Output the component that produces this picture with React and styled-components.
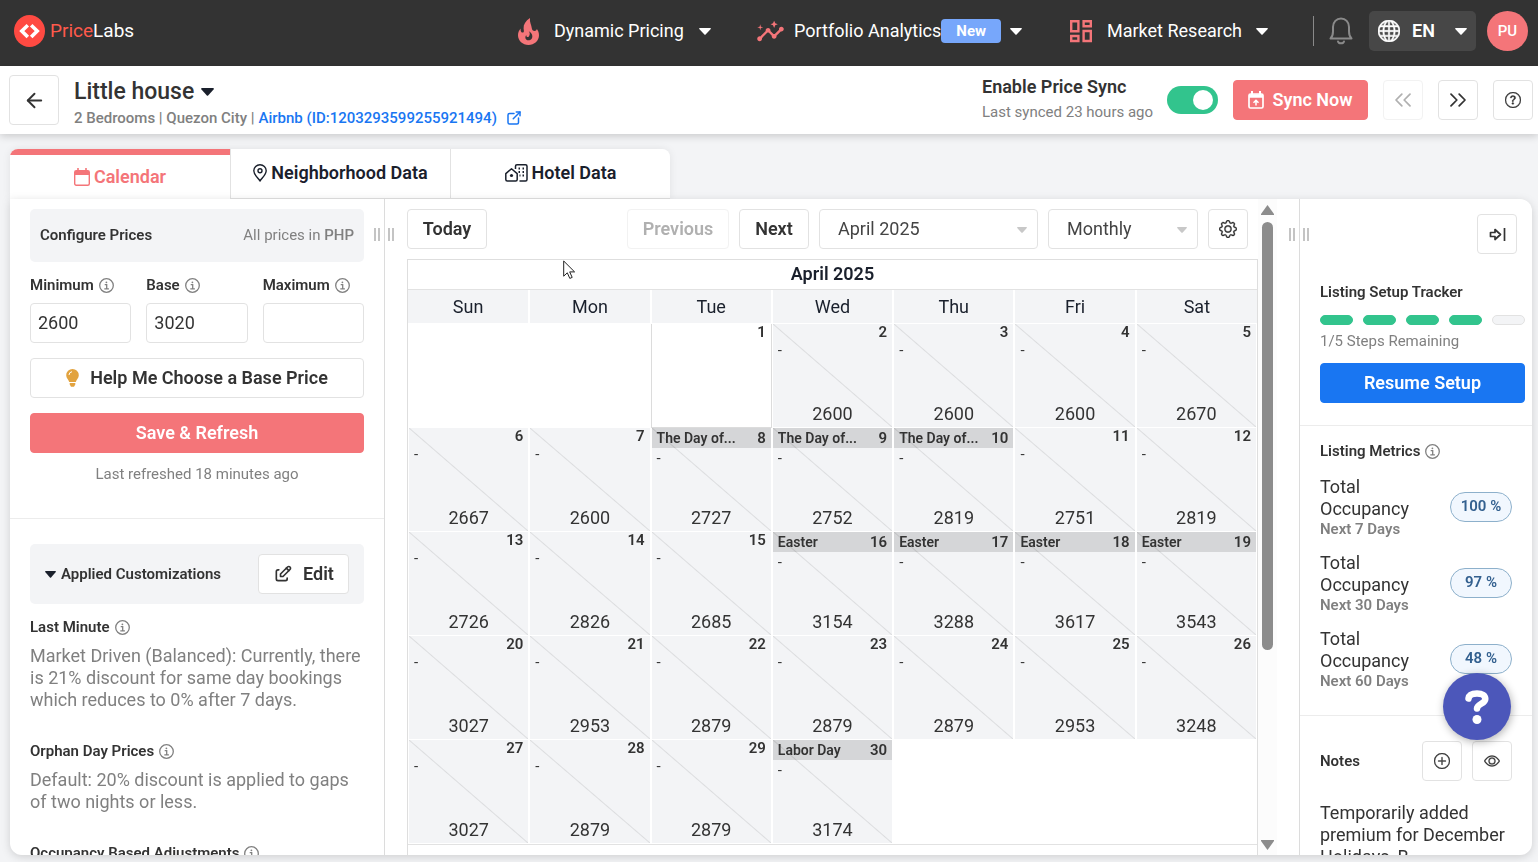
import React from 'react';
import styled, { createGlobalStyle, css } from 'styled-components';
import { MdInsights } from 'react-icons/md';
import { BsGlobe, BsGear, BsQuestionCircle, BsPlusCircle, BsEye } from 'react-icons/bs';
import { TbEdit, TbExternalLink } from 'react-icons/tb';
import { ArrowLeft, ChevronsLeft, ChevronsRight } from 'lucide-react';

const color = {
  coral: '#f47579',
  green: '#32c48d',
  blue: '#1976f2',
  dark: '#333333',
  ink: '#1a202c',
  muted: '#808080',
  line: '#e2e2e2',
  wash: '#f3f4f6',
};

const GlobalStyle = createGlobalStyle`
  *, *::before, *::after { box-sizing: border-box; }
  body {
    margin: 0;
    background: ${color.wash};
    color: ${color.dark};
    font-family: Roboto, "Liberation Sans", sans-serif;
    font-size: 18px;
    line-height: 22px;
  }
  button, input, select { font: inherit; color: inherit; margin: 0; }
  button { cursor: pointer; }
  h1, h2, h3, p { margin: 0; }
  svg { display: block; flex: none; }
`;

const Page = styled.div`
  height: 100vh;
  display: flex;
  flex-direction: column;
  overflow: hidden;
  padding-bottom: 7px;
`;

/* ---------- top bar ---------- */

const TopBar = styled.header`
  flex: 0 0 66px;
  display: flex;
  align-items: center;
  padding: 0 10px 4px 14px;
  background: ${color.dark};
  color: #fff;
`;

const Brand = styled.a`
  display: flex;
  align-items: center;
  gap: 5px;
  margin-right: auto;
  color: #fff;
  font-size: 19px;
  text-decoration: none;
  em { font-style: normal; color: #ff5a4c; }
`;

const NavList = styled.nav`
  display: flex;
  align-items: center;
`;

const NavButton = styled.button`
  flex: 0 0 ${(p) => p.$basis};
  display: flex;
  align-items: center;
  gap: ${(p) => p.$gap};
  padding: 0;
  border: 0;
  background: none;
  white-space: nowrap;
  text-align: left;
`;

const NavText = styled.span`
  display: flex;
  align-items: center;
`;

const NewTag = styled.span`
  padding: 1px 15px;
  border-radius: 4px;
  background: #77a7fb;
  font-size: 15px;
  font-weight: 700;
`;

const TopTools = styled.div`
  display: flex;
  align-items: center;
  height: 40px;
`;

const Rule = styled.span`
  width: 1px;
  height: 30px;
  background: #8a8a8a;
`;

const BellButton = styled.button`
  padding: 0 16px 0 15px;
  border: 0;
  background: none;
  color: #8a8a8a;
`;

const LanguageButton = styled.button`
  display: flex;
  align-items: center;
  gap: 12px;
  width: 107px;
  height: 40px;
  padding: 0 9px;
  border: 0;
  border-radius: 5px;
  background: #474747;
  font-weight: 600;
  svg:last-child { margin-left: auto; }
`;

const Avatar = styled.button`
  width: 41px;
  height: 40px;
  margin-left: 11px;
  padding: 0;
  border: 0;
  border-radius: 50%;
  background: ${color.coral};
  font-size: 15px;
  font-weight: 500;
`;

/* ---------- shared controls ---------- */

const Button = styled.button`
  display: flex;
  align-items: center;
  justify-content: center;
  gap: ${(p) => p.$gap || '8px'};
  width: ${(p) => p.$width || 'auto'};
  height: 40px;
  padding: 0;
  border: 1px solid ${color.line};
  border-radius: 4px;
  background: #fff;
  color: ${color.dark};
  font-weight: 600;
  white-space: nowrap;
  &:disabled { border-color: #f2f2f2; color: #b0b0b0; cursor: default; }
  ${(p) => p.$fill && css`
    border-color: ${p.$fill};
    background: ${p.$fill};
    color: #fff;
  `}
`;

const Heading = styled.h3`
  display: flex;
  align-items: center;
  gap: 5px;
  font-size: 15px;
  line-height: 20px;
  font-weight: 600;
`;

const Small = styled.p`
  font-size: 15px;
  line-height: 20px;
  color: ${color.muted};
  strong { font-weight: 500; }
`;

/* ---------- listing bar ---------- */

const ListingBar = styled.section`
  position: relative;
  flex: 0 0 68px;
  display: flex;
  align-items: center;
  padding: 0 5px 0 9px;
  background: #fff;
  box-shadow: 0 2px 8px rgba(0, 0, 0, 0.18);
`;

const BackButton = styled(Button)`
  width: 50px;
  height: 50px;
`;

const ListingName = styled.div`
  margin: 0 auto 0 15px;
  padding-top: 6px;
  font-weight: 500;
  color: ${color.muted};
`;

const ListingTitle = styled.h1`
  display: flex;
  align-items: center;
  gap: 7px;
  font-size: 23px;
  line-height: 30px;
  font-weight: 500;
  color: ${color.dark};
`;

const ListingMeta = styled.p`
  display: flex;
  align-items: center;
  gap: 4px;
  font-size: 15px;
`;

const ChannelLink = styled.a`
  display: flex;
  align-items: center;
  gap: 8px;
  color: ${color.blue};
  text-decoration: none;
`;

const SyncInfo = styled.label`
  width: 185px;
  font-weight: 600;
  line-height: 24px;
  small {
    display: block;
    font-size: 15px;
    line-height: 26px;
    font-weight: 400;
    color: ${color.muted};
  }
`;

const Toggle = styled.input`
  appearance: none;
  width: 51px;
  height: 28px;
  margin: 0;
  border-radius: 14px;
  background: ${color.green};
  cursor: pointer;
  &::before {
    content: '';
    display: block;
    width: 20px;
    height: 20px;
    margin: 4px 5px 4px 26px;
    border-radius: 50%;
    background: #fff;
  }
`;

const ListingActions = styled.div`
  display: flex;
  gap: 15px;
  margin-left: 15px;
`;

/* ---------- tabs ---------- */

const TabStrip = styled.div`
  flex: none;
  display: flex;
  width: max-content;
  margin: 15px 0 0 10px;
  border-radius: 8px 8px 0 0;
  overflow: hidden;
  box-shadow: 0 0 8px rgba(0, 0, 0, 0.08);
`;

const Tab = styled.button`
  display: flex;
  align-items: center;
  justify-content: center;
  gap: 4px;
  width: 220px;
  height: 50px;
  padding: 0 0 2px;
  border: 0;
  border-bottom: 1px solid ${color.line};
  border-left: 1px solid ${color.line};
  background: #fff;
  color: ${color.ink};
  font-weight: 600;
  ${(p) => p.$active && css`
    padding: 0;
    border-top: 6px solid ${color.coral};
    border-bottom: 0;
    border-left: 0;
    color: ${color.coral};
  `}
`;

/* ---------- workspace ---------- */

const WorkspaceShadow = styled.div`
  flex: 1;
  min-height: 0;
  display: flex;
  flex-direction: column;
  filter: drop-shadow(0 2px 4px rgba(0, 0, 0, 0.15));
`;

const Workspace = styled.main`
  flex: 1;
  min-height: 0;
  display: flex;
  margin: 0 6px 0 10px;
  border-radius: 0 12px 12px 12px;
  overflow: hidden;
  background: #fff;
`;

const Splitter = styled.div`
  position: relative;
  flex: 0 0 1px;
  background: #dcdcdc;
`;

const Grips = styled.span`
  position: absolute;
  top: 29px;
  left: -10px;
  display: flex;
  justify-content: space-between;
  width: 20px;
  height: 13px;
  i { width: 6px; border: solid #c4c4c4; border-width: 0 2px; }
`;

const PricePanel = styled.aside`
  flex: 0 0 374px;
  overflow: hidden;
`;

const PriceSection = styled.section`
  display: flex;
  flex-direction: column;
  gap: 15px;
  padding: 10px 20px 34px;
  border-bottom: 1px solid #ececec;
`;

const RefreshNote = styled(Small)`
  margin-top: -4px;
  text-align: center;
`;

const ShadedBar = styled.div`
  display: flex;
  align-items: center;
  justify-content: space-between;
  height: ${(p) => p.$height};
  padding: ${(p) => p.$padding};
  border-radius: 5px;
  background: ${color.wash};
`;

const PriceFields = styled.div`
  display: grid;
  grid-template-columns: repeat(3, 1fr);
  gap: 15px;
  margin-top: -2px;
`;

const Field = styled.label`
  display: flex;
  flex-direction: column;
  gap: 8px;
  font-size: 15px;
  line-height: 20px;
  font-weight: 600;
  span { display: flex; align-items: center; gap: 5px; }
  input {
    width: 100%;
    height: 40px;
    padding: 0 7px 2px;
    border: 1px solid ${color.line};
    border-radius: 4px;
    background: #fff;
    font-size: 18px;
    font-weight: 400;
  }
`;

const Customizations = styled.section`
  padding: 25px 20px 0;
`;

const Customization = styled.article`
  margin-top: ${(p) => (p.$first ? '13px' : '30px')};
  p { margin-top: 8px; color: ${color.muted}; }
`;

/* ---------- calendar ---------- */

const CalendarPane = styled.section`
  flex: 1;
  min-width: 0;
  display: flex;
  overflow: hidden;
  padding-left: 22px;
`;

const CalendarBody = styled.div`
  flex: 1;
  min-width: 0;
`;

const CalendarToolbar = styled.div`
  display: flex;
  gap: 10px;
  padding: 10px 10px 10px 0;
  button:first-child { margin-right: auto; }
`;

const SelectBox = styled.span`
  position: relative;
  display: block;
  width: ${(p) => p.$width};
  select {
    appearance: none;
    width: 100%;
    height: 40px;
    padding: 0 18px;
    border: 1px solid ${color.line};
    border-radius: 4px;
    background: #fff;
    color: #444;
  }
  svg {
    position: absolute;
    top: 18px;
    right: 11px;
    color: #c8c8c8;
    pointer-events: none;
  }
`;

const MonthFrame = styled.div`
  height: 100%;
  border: 1px solid #dedede;
`;

const MonthTable = styled.table`
  width: 100%;
  table-layout: fixed;
  border-collapse: separate;
  border-spacing: 0;
  border-bottom: 1px solid ${color.line};
  caption {
    height: 30px;
    padding-top: 3px;
    border-bottom: 1px solid ${color.line};
    color: ${color.ink};
    font-weight: 600;
  }
  th {
    height: 34px;
    padding: 0;
    border: solid #fff;
    border-width: 0 1px 1px;
    background: ${color.wash};
    color: ${color.ink};
    font-weight: 400;
  }
  th:first-child { border-left: 0; }
  th:last-child { border-right: 0; }
`;

const DayCell = styled.td`
  height: 104px;
  padding: 0;
  border: solid #fff;
  border-width: 0 1px 1px;
  ${(p) => p.$kind === 'priced' && css`
    background: linear-gradient(to top right, transparent calc(50% - 1px), #dcdddf 50%, transparent calc(50% + 1px)) ${color.wash};
  `}
  ${(p) => p.$kind === 'open' && css`
    border-color: #dcdcdc;
  `}
`;

const Day = styled.div`
  height: 103px;
  display: flex;
  flex-direction: column;
`;

const DayTop = styled.div`
  display: flex;
  justify-content: space-between;
  height: ${(p) => (p.$holiday ? '20px' : '16px')};
  padding: 0 5px;
  background: ${(p) => (p.$holiday ? 'rgba(0, 0, 0, 0.12)' : 'none')};
  font-size: 14px;
  line-height: ${(p) => (p.$holiday ? '20px' : '16px')};
  font-weight: 600;
  white-space: nowrap;
  b { margin-left: auto; font-size: 15px; font-weight: 600; }
`;

const Booking = styled.span`
  padding-left: 5px;
  font-size: 15px;
  line-height: 20px;
`;

const Price = styled.span`
  margin-top: auto;
  padding-bottom: 2px;
  text-align: center;
`;

const ScrollTrack = styled.div`
  flex: 0 0 19px;
  display: flex;
  flex-direction: column;
  align-items: center;
  gap: 7px;
  margin-right: 22px;
  padding: 6px 0 5px;
  background: #fcfcfc;
  color: #8c8c8c;
`;

const ScrollRoom = styled.div`
  flex: 1;
  width: 11px;
`;

const ScrollThumb = styled.div`
  height: 70%;
  border-radius: 6px;
  background: #8c8c8c;
`;

/* ---------- listing panel ---------- */

const ListingPanel = styled.aside`
  flex: 0 0 232px;
  overflow: hidden;
`;

const PanelSection = styled.section`
  padding: ${(p) => p.$padding};
  border-bottom: 1px solid #ececec;
  &:last-child { border-bottom: 0; }
`;

const PanelTop = styled.div`
  display: flex;
  justify-content: flex-end;
  padding: 0 8px 28px 0;
`;

const Steps = styled.div`
  display: flex;
  gap: 10px;
  margin: 13px 0 6px;
`;

const Step = styled.i`
  flex: 1;
  height: 10px;
  border-radius: 5px;
  border: 1px solid ${(p) => (p.$done ? color.green : color.line)};
  background: ${(p) => (p.$done ? color.green : color.wash)};
`;

const ResumeButton = styled(Button)`
  margin-top: 12px;
`;

const Metrics = styled.div`
  display: flex;
  flex-direction: column;
  gap: 10px;
  margin-top: 13px;
`;

const Metric = styled.div`
  display: flex;
  align-items: center;
  justify-content: space-between;
  height: 66px;
  p { width: 100px; }
  small { display: block; font-size: 15px; line-height: 18px; font-weight: 600; color: ${color.muted}; }
`;

const Badge = styled.span`
  width: 62px;
  height: 30px;
  border: 1px solid #8db0cb;
  border-radius: 15px;
  background: #f1f7fe;
  color: #33608f;
  font-size: 15px;
  line-height: 27px;
  font-weight: 600;
  text-align: center;
`;

const NotesHead = styled.div`
  display: flex;
  align-items: center;
  gap: 10px;
  margin-bottom: 21px;
  h3 { margin-right: auto; }
`;

const HelpBubble = styled.button`
  position: fixed;
  right: 27px;
  bottom: 122px;
  display: flex;
  align-items: center;
  justify-content: center;
  width: 68px;
  height: 67px;
  padding: 0;
  border: 0;
  border-radius: 50%;
  background: #4c57ba;
  box-shadow: 1px 2px 8px rgba(0, 0, 0, 0.3);
`;

const Pointer = styled.svg`
  position: fixed;
  left: 563px;
  top: 260px;
  pointer-events: none;
`;

/* ---------- icons ---------- */

const Caret = ({ width = 12, height = 7, fill = 'currentColor' }) => (
  <svg width={width} height={height} viewBox="0 0 12 7" preserveAspectRatio="none" aria-hidden="true">
    <path d="M0.6 0h10.8L12 .8 6.6 6.6Q6 7 5.4 6.6L0 .8z" fill={fill} />
  </svg>
);

const BrandMark = () => (
  <svg width="31" height="32" viewBox="0 0 31 32" aria-hidden="true">
    <ellipse cx="15.500" cy="16" rx="15.500" ry="16" fill="#ff4a42" />
    <path d="M13.800 10.200 7.800 16l6 6M17.200 10.200l6 5.800-6 6" fill="none" stroke="#fff" strokeWidth="3.600" />
  </svg>
);

const Flame = () => (
  <svg width="21" height="27" viewBox="0 0 21 27" aria-hidden="true">
    <path
      d="M12 0C7.500 3 5.300 6.500 5.600 10.500c.1 1.300.5 2.200.2 3.200-.3.900-1.500 1.200-2.300.5C2.700 13.500 2.500 12 2.700 10.500 1 12.300 0 14.600 0 17.200 0 22.600 4.700 27 10.500 27S21 22.600 21 17.200c0-2.600-.8-4.300-2.100-6.200-.3 1.200-1.200 2-2.400 2-1.500 0-2.600-1.200-2.700-2.700C13.600 7.500 11.300 4 12 0z"
      fill={color.coral}
    />
    <path
      d="M10.800 13.200c1.300 1.800 1.200 3.400.2 5-.7 1.100-1.800 1.200-2.400.4-.3-.5-.3-1-.2-1.500-1.300 1.300-1.500 3.200-.2 4.400 1.400 1.300 4 1.100 5.300-.5 1.900-2.500.5-6.300-2.700-7.800z"
      fill={color.dark}
    />
  </svg>
);

const Dashboard = () => (
  <svg width="24" height="24" viewBox="0 0 24 24" fill="none" stroke={color.coral} strokeWidth="2.400" aria-hidden="true">
    <path d="M2.200 2.200h7.200v10H2.200zM14.600 2.200h7.200v5h-7.200zM2.200 17h7.200v5H2.200zM14.600 12h7.200v10h-7.200z" />
  </svg>
);

const Bell = () => (
  <svg width="24" height="28" viewBox="0 0 24 28" fill="none" stroke="currentColor" strokeWidth="2" strokeLinecap="round" aria-hidden="true">
    <path d="M1.500 21.500h21c-2-2-2.500-4-2.500-7V10c0-5-3.500-8.500-8-8.500S4 5 4 10v4.500c0 3-.5 5-2.500 7z" strokeLinejoin="round" />
    <path d="M9 24.500c.6 2.400 5.400 2.400 6 0" />
  </svg>
);

const CalendarIcon = () => (
  <svg width="16" height="18" viewBox="0 0 16 18" fill="none" stroke="currentColor" aria-hidden="true">
    <rect x=".7" y="2.700" width="14.600" height="14.500" rx="1.500" strokeWidth="1.400" />
    <path d="M1 5h14" strokeWidth="4" />
    <path d="M4 0v4M12 0v4" strokeWidth="1.600" />
  </svg>
);

const CalendarUp = () => (
  <svg width="16" height="18" viewBox="0 0 16 18" fill="none" stroke="currentColor" aria-hidden="true">
    <rect x="1" y="3" width="14" height="14" rx="1.500" strokeWidth="1.700" />
    <path d="M1 5h14" strokeWidth="3.500" />
    <path d="M4 0v4M12 0v4" strokeWidth="2" />
    <path d="M8 14.500V9.500M5.500 11.800 8 9.300l2.500 2.500" strokeWidth="1.500" />
  </svg>
);

const Pin = () => (
  <svg width="14" height="18" viewBox="0 0 14 18" fill="none" stroke="currentColor" strokeWidth="1.400" aria-hidden="true">
    <path d="M7 17C5 14 .8 10.500.8 6.700a6.200 6 0 0 1 12.400 0C13.200 10.500 9 14 7 17z" strokeLinejoin="round" />
    <circle cx="7" cy="6.800" r="2" />
  </svg>
);

const Hotel = () => (
  <svg width="23" height="18" viewBox="0 0 23 18" fill="none" stroke="currentColor" strokeWidth="1.500" strokeLinejoin="round" aria-hidden="true">
    <path d="M.8 15.500V9.600L6.500 4.800l5.700 4.800v5.900q0 1.500-1.500 1.500H2.300Q.8 17 .8 15.500z" />
    <path d="M10.500 5V2.300Q10.500.8 12 .8h8.500Q22 .8 22 2.300v13.200q0 1.500-1.500 1.500H14.500" />
    <circle cx="6.500" cy="11.500" r="1.600" fill="currentColor" stroke="none" />
    <path d="M13.500 4.500H15M17.500 4.500H19M13.500 8H15M17.500 8H19M14.500 11.500h1M17.500 11.500H19" strokeWidth="1.800" />
  </svg>
);

const Bulb = () => (
  <svg width="13" height="18" viewBox="0 0 13 18" aria-hidden="true">
    <path d="M6.500 0A6.300 6.300 0 0 0 .2 6.300c0 3 2.300 4.200 3 6.700h6.600c.7-2.500 3-3.700 3-6.700A6.300 6.300 0 0 0 6.500 0zM3.700 14h5.600v1.500l-1.300 2.300H5l-1.300-2.300z" fill="#e2a33f" />
    <path d="M3 6a3.500 3.500 0 0 1 3-3.300" fill="none" stroke="#fff" />
  </svg>
);

const ArrowToBar = () => (
  <svg width="17" height="15" viewBox="0 0 17 15" fill="none" stroke="currentColor" strokeWidth="1.700" strokeLinejoin="round" aria-hidden="true">
    <path d="M1.500 5.500h4.500V2.500l5.500 5L6 12.500v-3H1.500zM15.500 1v13" />
  </svg>
);

const QuestionMark = () => (
  <svg width="26" height="36" viewBox="0 0 26 36" aria-hidden="true">
    <path d="M4.500 9.500C5 5.500 8.500 4.500 13 4.500c5.300 0 8.300 2 8.300 5.500 0 5-8 4.500-8.300 9.500" fill="none" stroke="#fff" strokeWidth="6.500" strokeLinecap="round" />
    <circle cx="13" cy="30.500" r="4.500" fill="#fff" />
  </svg>
);

const Info = () => (
  <svg width="15" height="15" viewBox="0 0 15 15" fill="none" stroke={color.muted} strokeWidth="1.300" aria-hidden="true">
    <circle cx="7.500" cy="7.500" r="6.800" />
    <path d="M5.700 6.600h2v4.200M5.300 10.900h4.600" />
    <circle cx="7.400" cy="4.300" r=".9" fill={color.muted} stroke="none" />
  </svg>
);

/* ---------- data ---------- */

const weekdays = ['Sun', 'Mon', 'Tue', 'Wed', 'Thu', 'Fri', 'Sat'];

const prices = [
  null, 2600, 2600, 2600, 2670,
  2667, 2600, 2727, 2752, 2819, 2751, 2819,
  2726, 2826, 2685, 3154, 3288, 3617, 3543,
  3027, 2953, 2879, 2879, 2879, 2953, 3248,
  3027, 2879, 2879, 3174,
];

const holidays = {
  8: 'The Day of...', 9: 'The Day of...', 10: 'The Day of...',
  16: 'Easter', 17: 'Easter', 18: 'Easter', 19: 'Easter',
  30: 'Labor Day',
};

const weeks = Array.from({ length: 5 }, (_, week) =>
  weekdays.map((_, column) => {
    const date = week * 7 + column - 1;
    return date >= 1 && date <= 30 ? date : null;
  })
);

const metrics = [
  { span: 'Next 7 Days', value: '100 %' },
  { span: 'Next 30 Days', value: '97 %' },
  { span: 'Next 60 Days', value: '48 %' },
];

const priceFields = [
  { label: 'Minimum', value: '2600' },
  { label: 'Base', value: '3020' },
  { label: 'Maximum', value: '' },
];

/* ---------- page ---------- */

function CalendarDay({ date }) {
  if (!date) return <DayCell />;
  const price = prices[date - 1];
  const holiday = holidays[date];
  return (
    <DayCell $kind={price ? 'priced' : 'open'}>
      <Day>
        <DayTop $holiday={Boolean(holiday)}>
          {holiday}
          <b>{date}</b>
        </DayTop>
        {price && <Booking>-</Booking>}
        {price && <Price>{price}</Price>}
      </Day>
    </DayCell>
  );
}

export default function App() {
  return (
    <Page>
      <GlobalStyle />
      <TopBar>
        <Brand href="#home">
          <BrandMark />
          <span><em>Price</em>Labs</span>
        </Brand>
        <NavList>
          <NavButton $basis="238px" $gap="15px">
            <Flame />
            <NavText>Dynamic Pricing</NavText>
            <Caret />
          </NavButton>
          <NavButton $basis="313px" $gap="9px">
            <MdInsights size={29} color={color.coral} />
            <NavText>Portfolio Analytics<NewTag>New</NewTag></NavText>
            <Caret />
          </NavButton>
          <NavButton $basis="244px" $gap="14px">
            <Dashboard />
            <NavText>Market Research</NavText>
            <Caret />
          </NavButton>
        </NavList>
        <TopTools>
          <Rule />
          <BellButton aria-label="Notifications"><Bell /></BellButton>
          <LanguageButton>
            <BsGlobe size={22} strokeWidth={0.4} />
            EN
            <Caret />
          </LanguageButton>
          <Avatar>PU</Avatar>
        </TopTools>
      </TopBar>

      <ListingBar>
        <BackButton aria-label="Back"><ArrowLeft size={23} strokeWidth={2} /></BackButton>
        <ListingName>
          <ListingTitle>Little house <Caret width={13} height={8} fill={color.ink} /></ListingTitle>
          <ListingMeta>
            2 Bedrooms | Quezon City |
            <ChannelLink href="#airbnb">
              Airbnb (ID:1203293599255921494)
              <TbExternalLink size={18} />
            </ChannelLink>
          </ListingMeta>
        </ListingName>
        <SyncInfo htmlFor="price-sync">
          Enable Price Sync
          <small>Last synced 23 hours ago</small>
        </SyncInfo>
        <Toggle id="price-sync" type="checkbox" defaultChecked />
        <ListingActions>
          <Button $width="135px" $fill={color.coral}><CalendarUp />Sync Now</Button>
          <Button $width="40px" disabled aria-label="Previous listing"><ChevronsLeft size={28} strokeWidth={1.5} /></Button>
          <Button $width="40px" aria-label="Next listing"><ChevronsRight size={28} strokeWidth={1.5} /></Button>
          <Button $width="40px" aria-label="Help"><BsQuestionCircle size={16} strokeWidth={0.3} /></Button>
        </ListingActions>
      </ListingBar>

      <TabStrip role="tablist">
        <Tab role="tab" aria-selected="true" $active><CalendarIcon />Calendar</Tab>
        <Tab role="tab"><Pin />Neighborhood Data</Tab>
        <Tab role="tab"><Hotel />Hotel Data</Tab>
      </TabStrip>

      <WorkspaceShadow>
        <Workspace>
          <PricePanel>
            <PriceSection>
              <ShadedBar $height="53px" $padding="0 10px 2px">
                <Heading>Configure Prices</Heading>
                <Small>All prices in <strong>PHP</strong></Small>
              </ShadedBar>
              <PriceFields>
                {priceFields.map((field) => (
                  <Field key={field.label}>
                    <span>{field.label}<Info /></span>
                    <input defaultValue={field.value} />
                  </Field>
                ))}
              </PriceFields>
              <Button $gap="11px"><Bulb />Help Me Choose a Base Price</Button>
              <Button $fill={color.coral}>Save &amp; Refresh</Button>
              <RefreshNote>Last refreshed 18 minutes ago</RefreshNote>
            </PriceSection>
            <Customizations>
              <ShadedBar $height="60px" $padding="0 15px">
                <Heading><Caret width={11} height={7} fill={color.ink} />Applied Customizations</Heading>
                <Button $width="91px" $gap="10px"><TbEdit size={20} />Edit</Button>
              </ShadedBar>
              <Customization $first>
                <Heading>Last Minute<Info /></Heading>
                <p>Market Driven (Balanced): Currently, there is 21% discount for same day bookings which reduces to 0% after 7 days.</p>
              </Customization>
              <Customization>
                <Heading>Orphan Day Prices<Info /></Heading>
                <p>Default: 20% discount is applied to gaps of two nights or less.</p>
              </Customization>
              <Customization>
                <Heading>Occupancy Based Adjustments<Info /></Heading>
              </Customization>
            </Customizations>
          </PricePanel>

          <Splitter><Grips><i /><i /></Grips></Splitter>

          <CalendarPane>
            <CalendarBody>
              <CalendarToolbar>
                <Button $width="80px">Today</Button>
                <Button $width="102px" disabled>Previous</Button>
                <Button $width="70px">Next</Button>
                <SelectBox $width="219px">
                  <select aria-label="Month" defaultValue="April 2025"><option>April 2025</option></select>
                  <Caret width={10} height={6} />
                </SelectBox>
                <SelectBox $width="150px">
                  <select aria-label="View" defaultValue="Monthly"><option>Monthly</option></select>
                  <Caret width={10} height={6} />
                </SelectBox>
                <Button $width="40px" aria-label="Calendar settings"><BsGear size={18} strokeWidth={0.3} /></Button>
              </CalendarToolbar>
              <MonthFrame>
                <MonthTable>
                  <caption>April 2025</caption>
                  <thead>
                    <tr>{weekdays.map((name) => <th key={name} scope="col">{name}</th>)}</tr>
                  </thead>
                  <tbody>
                    {weeks.map((week, row) => (
                      <tr key={row}>
                        {week.map((date, column) => <CalendarDay key={column} date={date} />)}
                      </tr>
                    ))}
                  </tbody>
                </MonthTable>
              </MonthFrame>
            </CalendarBody>
            <ScrollTrack>
              <svg width="13" height="10" viewBox="0 0 13 10" fill="currentColor"><path d="M6.500 0 13 9v1H0V9z" /></svg>
              <ScrollRoom><ScrollThumb /></ScrollRoom>
              <svg width="13" height="10" viewBox="0 0 13 10" fill="currentColor"><path d="M6.500 10 13 1V0H0v1z" /></svg>
            </ScrollTrack>
          </CalendarPane>

          <Splitter><Grips><i /><i /></Grips></Splitter>

          <ListingPanel>
            <PanelSection $padding="15px 7px 22px 20px">
              <PanelTop>
                <Button $width="40px" aria-label="Collapse panel"><ArrowToBar /></Button>
              </PanelTop>
              <Heading>Listing Setup Tracker</Heading>
              <Steps>
                {[true, true, true, true, false].map((done, index) => <Step key={index} $done={done} />)}
              </Steps>
              <Small>1/5 Steps Remaining</Small>
              <ResumeButton $width="100%" $fill={color.blue}>Resume Setup</ResumeButton>
            </PanelSection>
            <PanelSection $padding="15px 20px 23px">
              <Heading>Listing Metrics<Info /></Heading>
              <Metrics>
                {metrics.map((metric) => (
                  <Metric key={metric.span}>
                    <p>Total Occupancy<small>{metric.span}</small></p>
                    <Badge>{metric.value}</Badge>
                  </Metric>
                ))}
              </Metrics>
            </PanelSection>
            <PanelSection $padding="25px 20px 0">
              <NotesHead>
                <Heading>Notes</Heading>
                <Button $width="40px" aria-label="Add note"><BsPlusCircle size={16} strokeWidth={0.3} /></Button>
                <Button $width="40px" aria-label="View notes"><BsEye size={16} strokeWidth={0.3} /></Button>
              </NotesHead>
              <p>Temporarily added premium for December Holidays_B</p>
            </PanelSection>
          </ListingPanel>
        </Workspace>
      </WorkspaceShadow>

      <HelpBubble aria-label="Open help"><QuestionMark /></HelpBubble>
      <Pointer width="13" height="20" viewBox="0 0 13 20" aria-hidden="true">
        <path d="M.7 1v15.200l3.600-3.400 2.500 5.600 2.400-1-2.500-5.500h4.900z" fill="#fff" stroke="#222" />
      </Pointer>
    </Page>
  );
}
